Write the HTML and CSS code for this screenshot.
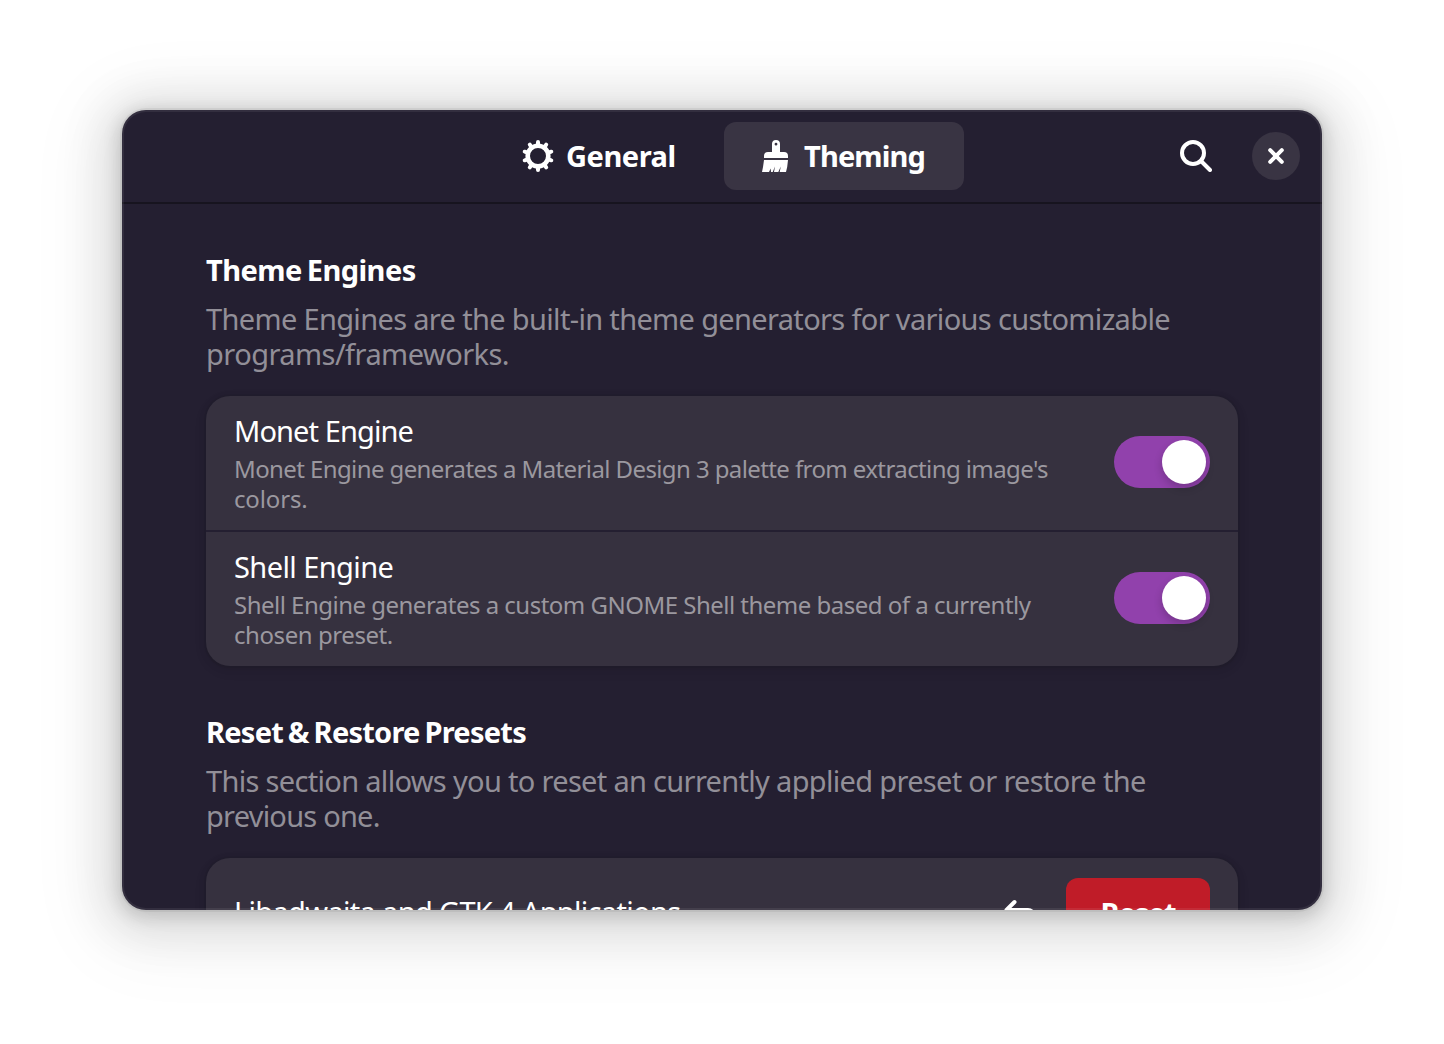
FILE: index.html
```
<!DOCTYPE html>
<html lang="en">
<head>
<meta charset="utf-8">
<title>Preferences</title>
<link rel="stylesheet" href="styles.css">
</head>
<body>
<main class="window">
  <header class="headerbar">
    <nav class="switcher">
      <button class="tab tab-general">
        <svg class="icon" viewBox="0 0 32 32"><circle cx="16" cy="16" r="10.300" fill="none" stroke="#fff" stroke-width="4.600"/><g stroke="#fff" stroke-width="4" stroke-linecap="round"><path d="M16 2v3M16 27v3M2.700 11.700l2.900.9M26.400 19.400l2.900.9M2.700 20.300l2.900-.9M26.400 12.600l2.900-.9M7.800 4.700l1.700 2.400M22.500 24.900l1.700 2.400M24.200 4.700l-1.700 2.400M9.500 24.900l-1.700 2.400"/></g></svg>
        <span class="tab-label label-general">General</span>
      </button>
      <button class="tab tab-theming active">
        <svg class="icon" viewBox="0 0 32 32" fill="#fff"><path fill-rule="evenodd" d="M12 4a4 4 0 0 1 8 0v8h4a4 4 0 0 1 4 4v2H4v-2a4 4 0 0 1 4-4h4zM16 2.800a1.400 1.400 0 1 0 0 2.800A1.400 1.400 0 0 0 16 2.800z"/><path d="M4 20h24l-.8 7-1.200 5h-6.300l1.100-5.500-2.500 5.500h-4.300l1-5.500-2.300 5.500h-1.700l-.3-3.500L9 32H2l1-5z"/></svg>
        <span class="tab-label label-theming">Theming</span>
      </button>
    </nav>
    <div class="actions">
      <svg class="icon" viewBox="0 0 32 32" fill="none" stroke="#fff" stroke-width="4" stroke-linecap="round"><circle cx="13" cy="13" r="11"/><path d="M21 21l9 9"/></svg>
      <button class="close"><svg class="close-icon" viewBox="0 0 16 16" stroke="#fff" stroke-width="4" stroke-linecap="round"><path d="M2.200 2.200l11.600 11.600M13.800 2.200L2.200 13.800"/></svg></button>
    </div>
  </header>
  <div class="content">
    <section class="group">
      <h2 class="heading h-engines">Theme Engines</h2>
      <p class="description"><span class="d1">Theme Engines are the built-in theme generators for various customizable</span><br><span class="d2">programs/frameworks.</span></p>
      <div class="card">
        <div class="row">
          <div class="text">
            <div class="title t1">Monet Engine</div>
            <div class="subtitle"><span class="s1">Monet Engine generates a Material Design 3 palette from extracting image's</span><br><span class="s2">colors.</span></div>
          </div>
          <div class="switch"><span class="knob"></span></div>
        </div>
        <div class="row">
          <div class="text">
            <div class="title t2">Shell Engine</div>
            <div class="subtitle"><span class="s3">Shell Engine generates a custom GNOME Shell theme based of a currently</span><br><span class="s4">chosen preset.</span></div>
          </div>
          <div class="switch"><span class="knob"></span></div>
        </div>
      </div>
    </section>
    <section class="group">
      <h2 class="heading h-reset">Reset &amp; Restore Presets</h2>
      <p class="description"><span class="d3">This section allows you to reset an currently applied preset or restore the</span><br><span class="d4">previous one.</span></p>
      <div class="card">
        <div class="row row-action">
          <div class="title t3">Libadwaita and GTK 4 Applications</div>
          <svg class="icon undo" viewBox="0 0 32 32" fill="none" stroke="#fff" stroke-width="4" stroke-linecap="round" stroke-linejoin="round"><path d="M10.500 6L2.500 14l8 8M2.500 14H24a6 6 0 0 1 6 6v4"/></svg>
          <button class="reset"><span class="reset-label">Reset</span></button>
        </div>
      </div>
    </section>
  </div>
</main>
</body>
</html>
```
FILE: styles.css
```
* { box-sizing: border-box; }
body {
  margin: 0;
  height: 1044px;
  padding: 110px 122px;
  overflow: hidden;
  background: #fff;
  color: #fff;
  font-family: "Noto Sans", sans-serif;
  font-size: 29px;
  white-space: nowrap;
}
button { border: 0; padding: 0; color: inherit; font: inherit; }
.window {
  position: relative;
  width: 1200px;
  height: 800px;
  overflow: hidden;
  border-radius: 24px;
  background: #241f31;
  box-shadow: 0 4px 16px 4px rgba(0,0,0,.13), 0 6px 44px 20px rgba(0,0,0,.1),
    0 12px 72px 34px rgba(0,0,0,.045), 0 0 0 2px rgba(0,0,0,.05);
}
.window::after {
  content: "";
  position: absolute;
  inset: 0;
  border-radius: 24px;
  box-shadow: inset 0 0 0 2px rgba(255,255,255,.07);
}
.icon { width: 32px; height: 32px; flex: none; display: block; }
.headerbar {
  display: grid;
  grid-template-columns: 1fr auto;
  height: 94px;
  border-bottom: 2px solid #17141f;
}
.switcher { display: flex; gap: 10px; padding: 12px 0 12px 362px; }
.tab {
  display: flex;
  align-items: center;
  width: 230px;
  height: 68px;
  padding-left: 38px;
  gap: 12px;
  border-radius: 12px;
  background: none;
  font-weight: 700;
}
.tab.active { width: 240px; padding-left: 36px; background: #393443; }
.tab-label { line-height: 40px; }
.label-general { letter-spacing: -.45px; }
.label-theming { letter-spacing: -.85px; }
.actions { display: flex; align-items: center; gap: 40px; padding-right: 22px; }
.close {
  display: grid;
  place-items: center;
  width: 48px;
  height: 48px;
  border-radius: 50%;
  background: #393443;
}
.close-icon { width: 16px; height: 16px; display: block; }
.content { padding: 47px 84px 0; }
.group { height: 462px; }
.heading { margin: 0; font-size: 29px; font-weight: 700; line-height: 38px; }
.h-engines { letter-spacing: -.55px; word-spacing: -2px; }
.h-reset { letter-spacing: -.75px; word-spacing: -2px; }
.description { margin: 12px 0 24px; line-height: 35px; height: 71px; color: #928f98; }
.d1 { letter-spacing: -.66px; }
.d2 { letter-spacing: -.55px; }
.d3 { letter-spacing: -.68px; }
.d4 { letter-spacing: -.77px; }
.card {
  height: 270px;
  border-radius: 24px;
  background: #36313f;
  box-shadow: 0 0 0 2px rgba(0,0,6,.03), 0 2px 6px 2px rgba(0,0,6,.07), 0 4px 12px 4px rgba(0,0,6,.03);
}
.row {
  display: flex;
  align-items: center;
  justify-content: space-between;
  height: 134px;
  padding: 0 28px 2px;
}
.row + .row { height: 136px; border-top: 2px solid #241f31; }
.text { padding-top: 1px; }
.title { line-height: 40px; margin-bottom: 3px; }
.t1 { letter-spacing: -.9px; }
.t2 { letter-spacing: -.58px; }
.t3 { letter-spacing: -.67px; margin-bottom: 0; }
.subtitle { font-size: 24px; line-height: 30px; color: #9b989f; }
.s1 { letter-spacing: -.6px; }
.s2 { letter-spacing: -.15px; }
.s3 { letter-spacing: -.51px; }
.s4 { letter-spacing: -.43px; }
.switch {
  width: 96px;
  height: 52px;
  padding: 4px;
  border-radius: 26px;
  background: #9141ac;
}
.knob {
  display: block;
  width: 44px;
  height: 44px;
  margin-left: auto;
  border-radius: 50%;
  background: #fff;
  box-shadow: 0 4px 8px rgba(0,0,0,.2);
}
.row-action { height: 108px; padding-bottom: 0; }
.undo { margin-left: auto; margin-right: 30px; }
.reset {
  width: 144px;
  height: 68px;
  border-radius: 12px;
  background: #c01c28;
  font-weight: 700;
}
.reset-label { letter-spacing: -1.2px; }
```
